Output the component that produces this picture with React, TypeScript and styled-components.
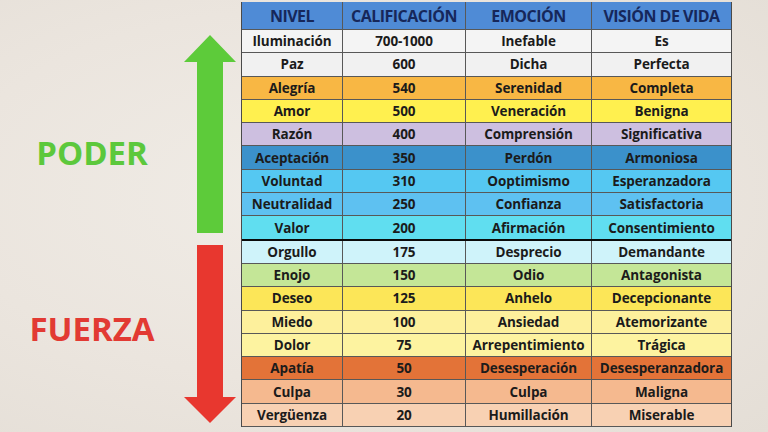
import React from 'react'
import styled, {createGlobalStyle} from 'styled-components'

const GlobalStyle = createGlobalStyle`
  html, body {
    margin: 0;
    padding: 0;
  }
  body {
    background: #ebe6df;
    font-family: "Open Sans", "Liberation Sans", sans-serif;
  }
`

const Page = styled.div`
  display: flex;
  width: 768px;
  height: 432px;
  overflow: hidden;
  background: radial-gradient(ellipse at 40% 45%, #f0ece6 0%, #ebe5de 55%, #e4ded6 100%);
`

const Labels = styled.div`
  display: flex;
  flex-direction: column;
  align-items: center;
  width: 184px;
  padding-top: 136px;
`

const Label = styled.div<{color: string, gapTop: number}>`
  margin-top: ${(props) => props.gapTop}px;
  color: ${(props) => props.color};
  font-size: 33px;
  font-weight: 700;
  line-height: 1;
`

const Arrows = styled.svg`
  flex: none;
  width: 52px;
  height: 432px;
  margin-right: 5px;
`

const Table = styled.div`
  display: flex;
  flex-direction: column;
  width: 491px;
  height: 425px;
  margin-top: 2px;
  border-left: 1px solid #4a4a4a;
  border-right: 1px solid #4a4a4a;
  box-sizing: border-box;
`

const Row = styled.div<{bg: string, thick?: boolean}>`
  display: grid;
  grid-template-columns: 101px 123px 126px 1fr;
  flex: 1;
  background: ${(props) => props.bg};
  border-bottom: ${(props) => props.thick ? '2px solid #0a0a0a' : '1px solid #585858'};
`

const HeaderRow = styled(Row)`
  flex: none;
  height: 28px;
  box-sizing: border-box;
`

const Cell = styled.div<{head?: boolean}>`
  display: flex;
  align-items: center;
  justify-content: center;
  border-right: 1px solid #585858;
  color: ${(props) => props.head ? '#16275a' : '#1b1b1b'};
  font-size: ${(props) => props.head ? '16px' : '13.5px'};
  font-weight: 700;
  letter-spacing: ${(props) => props.head ? '-0.5px' : '-0.1px'};
  white-space: nowrap;
  overflow: hidden;

  &:last-child {
    border-right: none;
  }
`

const rows: {cells: string[], bg: string, thick?: boolean}[] = [
    {cells: ['Iluminación', '700-1000', 'Inefable', 'Es'], bg: '#f4f4f4'},
    {cells: ['Paz', '600', 'Dicha', 'Perfecta'], bg: '#f1f1f1'},
    {cells: ['Alegría', '540', 'Serenidad', 'Completa'], bg: '#f8b744'},
    {cells: ['Amor', '500', 'Veneración', 'Benigna'], bg: '#fff04f'},
    {cells: ['Razón', '400', 'Comprensión', 'Significativa'], bg: '#cdbfe0'},
    {cells: ['Aceptación', '350', 'Perdón', 'Armoniosa'], bg: '#3b91cb'},
    {cells: ['Voluntad', '310', 'Ooptimismo', 'Esperanzadora'], bg: '#55c8f2'},
    {cells: ['Neutralidad', '250', 'Confianza', 'Satisfactoria'], bg: '#5ec1f1'},
    {cells: ['Valor', '200', 'Afirmación', 'Consentimiento'], bg: '#60def0', thick: true},
    {cells: ['Orgullo', '175', 'Desprecio', 'Demandante'], bg: '#cff3fa'},
    {cells: ['Enojo', '150', 'Odio', 'Antagonista'], bg: '#c4e697'},
    {cells: ['Deseo', '125', 'Anhelo', 'Decepcionante'], bg: '#fce658'},
    {cells: ['Miedo', '100', 'Ansiedad', 'Atemorizante'], bg: '#fdf09c'},
    {cells: ['Dolor', '75', 'Arrepentimiento', 'Trágica'], bg: '#fdf3a0'},
    {cells: ['Apatía', '50', 'Desesperación', 'Desesperanzadora'], bg: '#e37338'},
    {cells: ['Culpa', '30', 'Culpa', 'Maligna'], bg: '#f5b98f'},
    {cells: ['Vergüenza', '20', 'Humillación', 'Miserable'], bg: '#f8d1b3'},
]

function App() {
    return (
        <Page>
            <GlobalStyle/>
            <Labels>
                <Label color="#5cc83c" gapTop={0}>PODER</Label>
                <Label color="#e23a33" gapTop={143}>FUERZA</Label>
            </Labels>
            <Arrows viewBox="0 0 52 432">
                <polygon fill="#5dcb3a" points="0,62 26,35 52,62 39,62 39,233 13,233 13,62"/>
                <polygon fill="#e8372f" points="13,245 39,245 39,397 52,397 26,423 0,397 13,397"/>
            </Arrows>
            <Table>
                <HeaderRow bg="#4f8bd6">
                    <Cell head>NIVEL</Cell>
                    <Cell head>CALIFICACIÓN</Cell>
                    <Cell head>EMOCIÓN</Cell>
                    <Cell head>VISIÓN DE VIDA</Cell>
                </HeaderRow>
                {rows.map((row) => (
                    <Row key={row.cells[0]} bg={row.bg} thick={row.thick}>
                        {row.cells.map((text, i) => <Cell key={i}>{text}</Cell>)}
                    </Row>
                ))}
            </Table>
        </Page>
    )
}

export default App
